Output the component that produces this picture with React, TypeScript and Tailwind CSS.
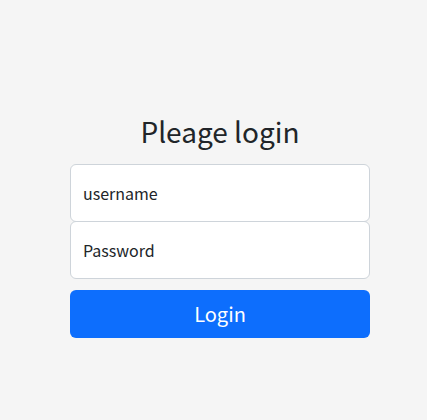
export default function App() {
  return (
    <div
      className="flex min-h-[420px] w-full justify-center bg-[#f5f5f5] pt-[114px] pl-[13px] text-[#212529]"
      style={{ fontFamily: '"Noto Sans CJK KR", "Noto Sans", sans-serif' }}
    >
      <form className="w-[300px]" onSubmit={(e) => e.preventDefault()}>
        <h1 className="mb-4 text-center text-[28px] leading-[34px] font-normal">
          Pleage login
        </h1>
        <input
          type="text"
          placeholder="username"
          className="block h-[58px] w-full rounded-md border border-[#ced4da] bg-white px-3 text-base leading-6 placeholder:text-[#212529] focus:outline-none"
        />
        <input
          type="password"
          placeholder="Password"
          className="-mt-px block h-[58px] w-full rounded-md border border-[#ced4da] bg-white px-3 text-base leading-6 placeholder:text-[#212529] focus:outline-none"
        />
        <button
          type="submit"
          className="mt-[11px] block h-12 w-full rounded-md bg-[#0d6efd] text-xl leading-[30px] text-white"
        >
          Login
        </button>
      </form>
    </div>
  );
}
